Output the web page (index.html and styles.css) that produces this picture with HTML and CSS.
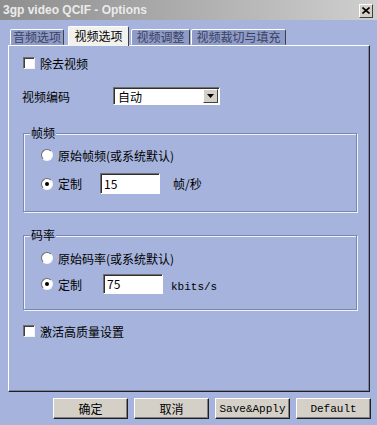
FILE: index.html
```html
<!DOCTYPE html>
<html lang="zh-CN">
<head>
  <meta charset="UTF-8" />
  <title>3gp video QCIF - Options</title>
  <link rel="stylesheet" href="styles.css">
</head>
<body>
  <div class="window">
    <div class="titlebar">
      <span class="title">3gp video QCIF - Options</span>
      <span class="close-btn">
        <svg width="8" height="7" viewBox="0 0 8 7"><path d="M0.5 0.5 L7.5 6.5 M7.5 0.5 L0.5 6.5" stroke="#000" stroke-width="1.6"/></svg>
      </span>
    </div>

    <div class="tabs">
      <div class="tab tab-audio">音频选项</div>
      <div class="tab tab-video active">视频选项</div>
      <div class="tab tab-adjust">视频调整</div>
      <div class="tab tab-crop">视频裁切与填充</div>
    </div>

    <div class="panel">
      <div class="check-row first">
        <span class="checkbox"></span>
        <span class="check-label">除去视频</span>
      </div>

      <div class="codec-row">
        <span class="codec-label">视频编码</span>
        <div class="select">
          <span class="select-value">自动</span>
          <span class="select-btn">
            <svg width="7" height="4" viewBox="0 0 7 4"><path d="M0 0 H7 L3.5 4 Z" fill="#000"/></svg>
          </span>
        </div>
      </div>

      <div class="group group-fps">
        <span class="legend">帧频</span>
        <div class="radio-row">
          <span class="radio"></span>
          <span class="radio-label">原始帧频(或系统默认)</span>
        </div>
        <div class="radio-row custom">
          <span class="radio checked"></span>
          <span class="radio-label short">定制</span>
          <span class="textbox fps">15</span>
          <span class="unit">帧/秒</span>
        </div>
      </div>

      <div class="group group-rate">
        <span class="legend">码率</span>
        <div class="radio-row">
          <span class="radio"></span>
          <span class="radio-label">原始码率(或系统默认)</span>
        </div>
        <div class="radio-row custom">
          <span class="radio checked"></span>
          <span class="radio-label short wide">定制</span>
          <span class="textbox rate">75</span>
          <span class="unit mono">kbits/s</span>
        </div>
      </div>

      <div class="check-row last">
        <span class="checkbox"></span>
        <span class="check-label">激活高质量设置</span>
      </div>
    </div>

    <div class="buttons">
      <button class="btn">确定</button>
      <button class="btn">取消</button>
      <button class="btn mono">Save&amp;Apply</button>
      <button class="btn mono">Default</button>
    </div>
  </div>
</body>
</html>
```

FILE: styles.css
```css
body {
  margin: 0;
  background: #a6b4dd;
  font-family: "Noto Sans CJK SC", "Liberation Sans", sans-serif;
  font-size: 12px;
  color: #000;
}
.window {
  width: 377px;
  height: 425px;
  overflow: hidden;
}

/* title bar */
.titlebar {
  height: 20px;
  display: flex;
  align-items: center;
  justify-content: space-between;
  padding: 0 4px 0 3px;
  background: linear-gradient(to right, #8e8e8e, #b4b4b4 60%, #cfcfcf);
}
.title {
  font-family: "Liberation Sans", sans-serif;
  font-weight: bold;
  font-size: 12px;
  color: #ebebeb;
  text-shadow: 0 0 1px #9a9a9a;
}
.close-btn {
  width: 14px;
  height: 14px;
  box-sizing: border-box;
  background: #d4d0c8;
  border: 1px solid;
  border-color: #fff #404040 #404040 #fff;
  display: flex;
  align-items: center;
  justify-content: center;
  margin-top: 1px;
}

/* tabs */
.tabs {
  height: 25px;
  display: flex;
  align-items: flex-end;
  padding-left: 10px;
}
.tab {
  height: 16px;
  box-sizing: border-box;
  border: 1px solid;
  border-color: #fff #404040 transparent #fff;
  border-radius: 2px 2px 0 0;
  background: #8f9cc8;
  color: #3a4262;
  line-height: 14px;
  text-align: center;
  margin-right: 2px;
}
.tab-audio { width: 54px; margin-right: 4px; }
.tab-video { width: 61px; }
.tab-adjust { width: 59px; margin-right: 1px; }
.tab-crop { width: 95px; }
.tab.active {
  height: 20px;
  background: #f1f1ee;
  color: #000;
  line-height: 18px;
  position: relative;
  z-index: 1;
  margin-bottom: -1px;
  border-bottom: none;
}

/* main panel */
.panel {
  margin: 0 7px 0 8px;
  height: 347px;
  box-sizing: border-box;
  border: 1px solid;
  border-color: #fff #202020 #202020 #fff;
  box-shadow: inset -1px -1px 0 #7c85a8;
  padding: 0 12px 0 13px;
}
.check-row {
  display: flex;
  align-items: center;
  height: 14px;
}
.check-row.first { margin-top: 10px; }
.check-row.last { margin-top: 14px; }
.checkbox {
  width: 12px;
  height: 12px;
  box-sizing: border-box;
  background: #fff;
  border: 1px solid;
  border-color: #6e6e6e #f4f4f4 #f4f4f4 #6e6e6e;
  box-shadow: inset 1px 1px 0 #404040;
  margin-left: 1px;
}
.check-label { margin-left: 5px; }

.codec-row {
  display: flex;
  align-items: center;
  margin-top: 17px;
  height: 18px;
}
.codec-label { width: 91px; }
.select {
  width: 107px;
  height: 18px;
  box-sizing: border-box;
  background: #fff;
  border: 1px solid;
  border-color: #6e6e6e #fff #fff #6e6e6e;
  box-shadow: inset 1px 1px 0 #303030;
  display: flex;
  align-items: center;
  justify-content: space-between;
  padding: 1px 1px 1px 4px;
}
.select-btn {
  width: 15px;
  height: 14px;
  box-sizing: border-box;
  background: #d4d0c8;
  border: 1px solid;
  border-color: #fff #404040 #404040 #fff;
  display: flex;
  align-items: center;
  justify-content: center;
}

/* group boxes */
.group {
  position: relative;
  margin-left: 1px;
  border: 1px solid #7c87b0;
  box-shadow: inset 1px 1px 0 #f0f2fa, 1px 1px 0 #f0f2fa;
  padding: 0 0 0 17px;
}
.group-fps { margin-top: 28px; height: 79px; box-sizing: border-box; }
.group-rate { margin-top: 23px; height: 75px; box-sizing: border-box; }
.legend {
  position: absolute;
  left: 6px;
  top: -9px;
  padding: 0 1px;
  background: #a6b4dd;
  line-height: 16px;
}
.radio-row {
  display: flex;
  align-items: center;
  height: 16px;
  margin-top: 13px;
}
.group-rate .radio-row { margin-top: 14px; }
.radio-row.custom { height: 21px; margin-top: 10px; }
.group-rate .radio-row.custom { margin-top: 8px; height: 20px; }
.radio {
  width: 12px;
  height: 12px;
  box-sizing: border-box;
  border-radius: 50%;
  background: #fff;
  border: 1px solid;
  border-color: #6e6e6e #f4f4f4 #f4f4f4 #6e6e6e;
  display: flex;
  align-items: center;
  justify-content: center;
}
.radio.checked::after {
  content: "";
  width: 4px;
  height: 4px;
  border-radius: 50%;
  background: #000;
}
.radio-label { margin-left: 5px; }
.radio-label.short { width: 42px; }
.radio-label.wide { width: 45px; }
.textbox {
  height: 21px;
  box-sizing: border-box;
  background: #fff;
  border: 1px solid;
  border-color: #6e6e6e #fff #fff #6e6e6e;
  box-shadow: inset 1px 1px 0 #303030;
  padding: 0 3px;
  line-height: 19px;
}
.textbox.fps { width: 60px; }
.textbox.rate { width: 60px; height: 20px; line-height: 18px; }
.unit { margin-left: 13px; }
.unit.mono { margin-left: 8px; margin-top: 6px; }
.mono {
  font-family: "Liberation Mono", monospace;
  font-size: 11px;
}

/* bottom buttons */
.buttons {
  display: flex;
  gap: 6px;
  padding-left: 53px;
  margin-top: 6px;
}
.btn {
  width: 75px;
  height: 21px;
  box-sizing: border-box;
  background: #d4d0c8;
  border: 1px solid;
  border-color: #fff #202020 #202020 #fff;
  box-shadow: inset -1px -1px 0 #808080;
  font-family: "Noto Sans CJK SC", sans-serif;
  font-size: 12px;
  padding: 0;
  color: #000;
}
.btn.mono {
  font-family: "Liberation Mono", monospace;
  font-size: 11px;
}
```
